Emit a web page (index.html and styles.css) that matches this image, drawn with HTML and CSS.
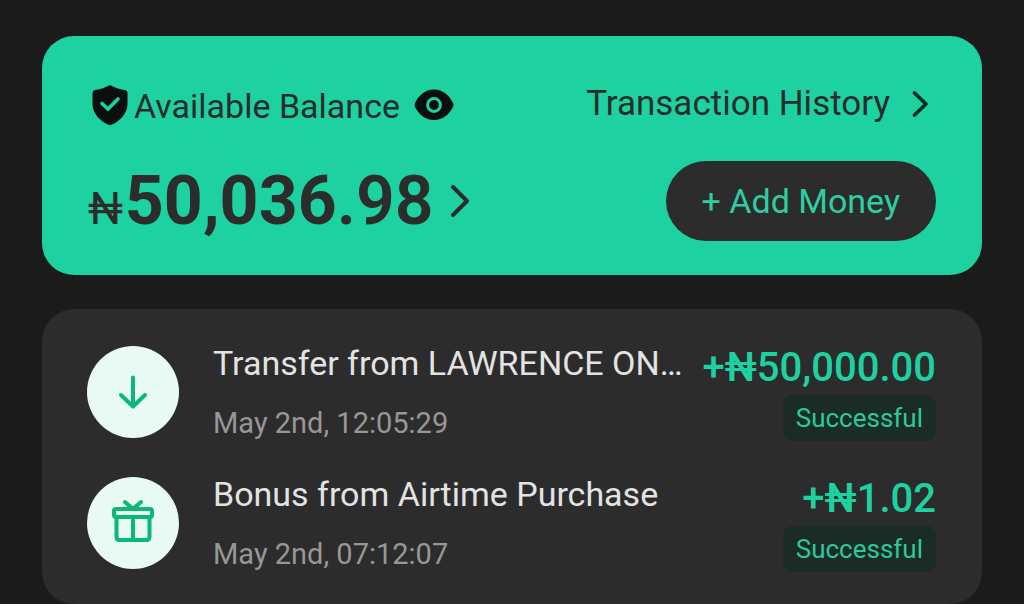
FILE: index.html
```html
<!DOCTYPE html>
<html lang="en">
<head>
<meta charset="utf-8">
<meta name="viewport" content="width=device-width, initial-scale=1">
<title>Wallet</title>
<link rel="stylesheet" href="styles.css">
</head>
<body>
<main class="wallet">
  <section class="balance">
    <div class="balance-row">
      <div class="available">
        <svg class="shield" viewBox="0 0 36 40" aria-hidden="true"><path d="M18 0 Q9.500 4.500 3 5 Q0.500 5.500 0.500 8 V19 C0.500 29 9 36.500 16 39.500 Q18 40.500 20 39.500 C27 36.500 35.500 29 35.500 19 V8 Q35.500 5.500 33 5 Q26.500 4.500 18 0Z" fill="#0b0f0e"/><path d="M10 18.500 L16 24 L26 14" fill="none" stroke="#1dd1a1" stroke-width="3.600" stroke-linecap="round"/></svg>
        <span class="label">Available Balance</span>
        <button class="icon-button eye-button" type="button" aria-label="Hide balance">
          <svg class="eye" viewBox="0 0 40 32" aria-hidden="true"><path d="M20 0.500 C30 0.500 36 8 39 14 Q40 16 39 18 C36 24 30 31 20 31 C10 31 4 24 1 18 Q0 16 1 14 C4 8 10 0.500 20 0.500Z" fill="#0b0f0e"/><circle cx="20" cy="16" r="6.400" fill="none" stroke="#1dd1a1" stroke-width="3"/></svg>
        </button>
      </div>
      <a class="history" href="#history">Transaction History
        <svg class="history-chevron" viewBox="0 0 16 26" aria-hidden="true"><path d="M2.500 2 L14 13 L2.500 24" /></svg>
      </a>
    </div>
    <div class="balance-row amount-row">
      <a class="total" href="#balance"><span class="total-text"><span class="currency">₦</span>50,036<span class="cents">.98</span></span>
        <svg class="total-chevron" viewBox="0 0 20 34" aria-hidden="true"><path d="M3 3 L17 17 L3 31" /></svg>
      </a>
      <button class="add-money" type="button">+ Add Money</button>
    </div>
  </section>

  <ul class="transactions">
    <li class="transaction">
      <span class="badge"><svg viewBox="0 0 92 92" aria-hidden="true"><path d="M46 31.500 V60 M34 49 L46 60.500 L58 49"/></svg></span>
      <div class="details">
        <p class="title">Transfer from LAWRENCE ON...</p>
        <p class="date">May 2nd, 12:05:29</p>
      </div>
      <div class="result">
        <p class="value">+₦50,000.00</p>
        <span class="status">Successful</span>
      </div>
    </li>
    <li class="transaction">
      <span class="badge"><svg viewBox="0 0 92 92" aria-hidden="true"><rect x="27" y="32" width="38" height="8" rx="2"/><path d="M29.500 40 V60 Q29.500 63 32.500 63 H59.500 Q62.500 63 62.500 60 V40 M46 40 V63 M38 25 L46 32 L54 25"/></svg></span>
      <div class="details">
        <p class="title">Bonus from Airtime Purchase</p>
        <p class="date">May 2nd, 07:12:07</p>
      </div>
      <div class="result">
        <p class="value">+₦1.02</p>
        <span class="status">Successful</span>
      </div>
    </li>
  </ul>
</main>
</body>
</html>
```
FILE: styles.css
```css
* { box-sizing: border-box; }

body {
  margin: 0;
  background: #1b1b1b;
  color: #2c2c2c;
  font-family: Roboto, "Liberation Sans", sans-serif;
}

p { margin: 0; }
a { color: inherit; text-decoration: none; }

button {
  border: 0;
  font-family: inherit;
  cursor: pointer;
}

svg { display: block; }

.wallet {
  display: flex;
  flex-direction: column;
  gap: 34px;
  padding: 36px 42px 0;
}

.balance {
  padding: 45px 46px 34px;
  border-radius: 32px;
  background: #1dd1a1;
}

.balance-row {
  display: flex;
  align-items: center;
  justify-content: space-between;
}

.available {
  display: flex;
  align-items: center;
  padding: 2px 0 0 4px;
}

.shield { width: 36px; height: 40px; }

.label {
  margin-left: 6px;
  padding-top: 2px;
  font-size: 34px;
  line-height: 42px;
}

.icon-button { padding: 0; background: none; }
.eye-button { margin-left: 14px; }
.eye { width: 40px; height: 32px; }

.history {
  display: flex;
  align-items: center;
  gap: 22px;
  padding-right: 8px;
  font-size: 35px;
  line-height: 42px;
}

.history-chevron {
  width: 16px;
  height: 26px;
  fill: none;
  stroke: #0b2a20;
  stroke-width: 3.6;
  stroke-linecap: round;
  stroke-linejoin: round;
}

.amount-row { margin-top: 34px; }

.total {
  display: flex;
  align-items: center;
  gap: 16px;
  font-size: 68px;
  font-weight: 700;
  line-height: 80px;
}

.currency {
  margin-right: 2px;
  font-size: 44px;
  font-weight: 400;
  line-height: 1;
}

.cents { font-weight: 600; }

.total-chevron {
  width: 20px;
  height: 34px;
  fill: none;
  stroke: #2c2c2c;
  stroke-width: 4;
  stroke-linecap: round;
  stroke-linejoin: round;
}

.add-money {
  padding: 19px 36px;
  border-radius: 40px;
  background: #2c2c2c;
  color: #2dcea2;
  font-size: 34px;
  line-height: 42px;
}

.transactions {
  display: flex;
  flex-direction: column;
  gap: 39px;
  margin: 0;
  padding: 37px 46px 35px 45px;
  border-radius: 32px;
  background: #2c2c2c;
  list-style: none;
}

.transaction {
  display: flex;
  height: 92px;
}

.badge {
  flex: none;
  width: 92px;
  height: 92px;
  border-radius: 50%;
  background: #e9faf5;
}

.badge svg {
  fill: none;
  stroke: #0cb878;
  stroke-width: 4;
  stroke-linecap: round;
  stroke-linejoin: round;
}

.details {
  flex: 1;
  min-width: 0;
  margin-left: 34px;
}

.title {
  overflow: hidden;
  color: #e3e3e3;
  font-size: 34px;
  line-height: 42px;
  margin-top: -4px;
  text-overflow: ellipsis;
  white-space: nowrap;
}

.date {
  margin-top: 22px;
  color: #979797;
  font-size: 29px;
  line-height: 34px;
}

.result {
  display: flex;
  flex: none;
  flex-direction: column;
  align-items: flex-end;
  gap: 6px;
  margin-left: 16px;
}

.value {
  color: #1dd1a1;
  font-size: 40px;
  font-weight: 500;
  line-height: 43px;
}

.status {
  padding: 8px 13px 7px;
  border-radius: 9px;
  background: #1a2c25;
  color: #2dc89c;
  font-size: 26px;
  line-height: 31px;
}
```
